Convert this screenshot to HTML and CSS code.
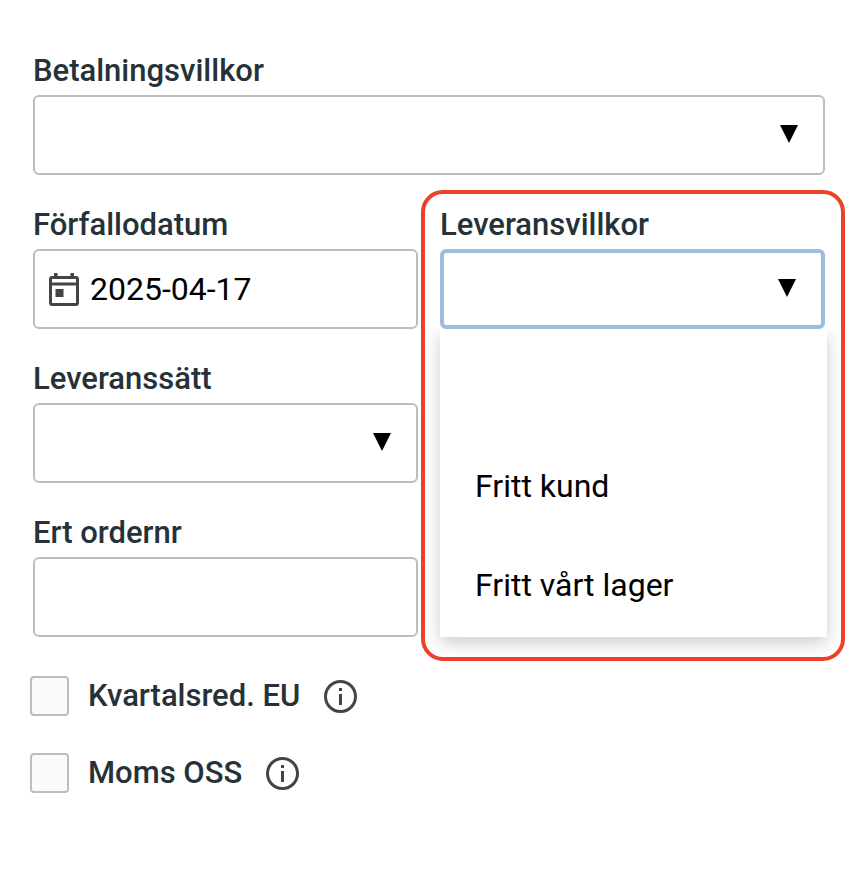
FILE: index.html
```html
<!DOCTYPE html>
<html lang="sv">
<head>
<meta charset="utf-8">
<meta name="viewport" content="width=device-width, initial-scale=1">
<title>Betalning och leverans</title>
<link rel="stylesheet" href="styles.css">
</head>
<body>
<form class="form">
  <div class="fields">
    <div class="field field-wide">
      <label class="label" for="payment-terms">Betalningsvillkor</label>
      <div class="control">
        <select id="payment-terms" class="input"><option></option></select>
        <svg class="arrow" viewBox="0 0 18 18" aria-hidden="true"><path d="M0 0h18L9 18z"/></svg>
      </div>
    </div>
    <div class="field">
      <label class="label" for="due-date">Förfallodatum</label>
      <div class="control">
        <svg class="calendar" viewBox="0 0 30 33" aria-hidden="true">
          <path fill-rule="evenodd" d="M5 0h3.500v3h13V0H25v3h2a3 3 0 0 1 3 3v24a3 3 0 0 1-3 3H3a3 3 0 0 1-3-3V6a3 3 0 0 1 3-3h2zM3 6v3.500h24V6zM3 12.500V30h24V12.500zM6.500 16h8v8h-8z"/>
        </svg>
        <input id="due-date" class="input input-date" type="text" value="2025-04-17">
      </div>
    </div>
    <div class="field field-open">
      <label class="label" for="delivery-terms">Leveransvillkor</label>
      <div class="control">
        <select id="delivery-terms" class="input input-active"><option></option></select>
        <svg class="arrow" viewBox="0 0 18 18" aria-hidden="true"><path d="M0 0h18L9 18z"/></svg>
      </div>
      <ul class="menu" role="listbox" aria-label="Leveransvillkor">
        <li class="option" role="option"></li>
        <li class="option" role="option">Fritt kund</li>
        <li class="option" role="option">Fritt vårt lager</li>
      </ul>
    </div>
    <div class="field">
      <label class="label" for="delivery-method">Leveranssätt</label>
      <div class="control">
        <select id="delivery-method" class="input"><option></option></select>
        <svg class="arrow" viewBox="0 0 18 18" aria-hidden="true"><path d="M0 0h18L9 18z"/></svg>
      </div>
    </div>
    <div class="field">
      <label class="label" for="order-number">Ert ordernr</label>
      <div class="control">
        <input id="order-number" class="input" type="text">
      </div>
    </div>
  </div>
  <div class="checks">
    <div class="check">
      <input id="quarterly" class="checkbox" type="checkbox">
      <label class="label" for="quarterly">Kvartalsred. EU</label>
      <button class="info" type="button" aria-label="Information">
        <svg class="info-icon" viewBox="0 0 33 33" aria-hidden="true"><circle cx="16.500" cy="16.500" r="15" fill="none" stroke="currentColor" stroke-width="3"/><path d="M15 8h3v3h-3zM15 14h3v11h-3z"/></svg>
      </button>
    </div>
    <div class="check">
      <input id="vat-oss" class="checkbox" type="checkbox">
      <label class="label" for="vat-oss">Moms OSS</label>
      <button class="info" type="button" aria-label="Information">
        <svg class="info-icon" viewBox="0 0 33 33" aria-hidden="true"><circle cx="16.500" cy="16.500" r="15" fill="none" stroke="currentColor" stroke-width="3"/><path d="M15 8h3v3h-3zM15 14h3v11h-3z"/></svg>
      </button>
    </div>
  </div>
</form>
</body>
</html>
```
FILE: styles.css
```css
* {
  box-sizing: border-box;
}

body {
  margin: 0;
  background: #fff;
  color: #000;
  font-family: Roboto, "Liberation Sans", sans-serif;
  font-size: 32px;
}

.form {
  padding: 52px 41px 52px 33px;
}

.fields {
  display: grid;
  grid-template-columns: 1fr 1fr;
  gap: 31px 22px;
}

.field {
  display: flex;
  flex-direction: column;
  min-width: 0;
}

.field .label {
  margin-bottom: 5px;
}

.field-wide {
  grid-column: 1 / -1;
}

.field-open {
  position: relative;
  grid-column: 2;
  grid-row: 2 / span 3;
}

/* Highlight frame round the open drop-down */
.field-open::after {
  content: "";
  position: absolute;
  inset: -16px -20px -24px -19px;
  border: 4px solid #ec4127;
  border-radius: 22px;
  pointer-events: none;
}

.label {
  color: #263238;
  font-size: 31px;
  font-weight: 500;
  line-height: 38px;
}

.control {
  position: relative;
}

.input {
  appearance: none;
  display: block;
  width: 100%;
  height: 80px;
  margin: 0;
  padding: 0 14px;
  border: 2px solid #babec1;
  border-radius: 6px;
  outline: 0;
  background: #fff;
  color: inherit;
  font: inherit;
}

.input-date {
  padding-left: 55px;
}

.input-active {
  border: 4px solid #9bbde0;
}

.arrow {
  position: absolute;
  top: 30px;
  right: 27px;
  width: 18px;
  height: 18px;
  pointer-events: none;
}

.input-active + .arrow {
  right: 29px;
}

.calendar {
  position: absolute;
  top: 24px;
  left: 16px;
  width: 30px;
  height: 33px;
  fill: #444;
}

.menu {
  flex: 1;
  margin: 0 -2px 0 0;
  padding: 9px 0 2px;
  background: #fff;
  box-shadow: 0 6px 16px rgba(0, 0, 0, 0.2);
  clip-path: inset(0 -24px -24px -24px);
  list-style: none;
}

.option {
  height: 99px;
  padding: 0 35px;
  line-height: 99px;
}

.checks {
  display: grid;
  gap: 37px;
  margin: 39px 0 0 -3px;
}

.check {
  display: flex;
  align-items: center;
}

.checkbox {
  appearance: none;
  width: 39px;
  height: 40px;
  margin: 0 19px 0 0;
  border: 2px solid #babec1;
  border-radius: 4px;
  background: #fafafa;
}

.info {
  display: flex;
  margin: 0 0 0 24px;
  padding: 0;
  border: 0;
  background: none;
  color: #444;
}

.info-icon {
  width: 33px;
  height: 33px;
  fill: currentColor;
}
```
